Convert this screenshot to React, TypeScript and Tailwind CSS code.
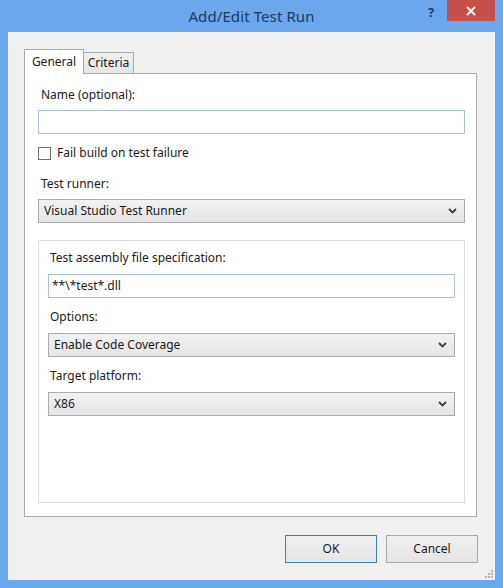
import React from 'react';

const Chevron = () => (
    <svg width="9" height="6" viewBox="0 0 9 6" className="shrink-0">
        <path d="M1 1 L4.5 4.5 L8 1" fill="none" stroke="#404040" strokeWidth="1.8" />
    </svg>
);

const Select = ({ value }: { value: string }) => (
    <div className="h-[24px] flex items-center justify-between pl-[5px] pr-[7px] border border-[#acacac] bg-gradient-to-b from-[#f2f2f2] to-[#e5e5e5] text-[#1a1a1a]">
        <span>{value}</span>
        <Chevron />
    </div>
);

const Label = ({ children, className = '' }: { children: React.ReactNode; className?: string }) => (
    <div className={`h-[16px] leading-[16px] text-[#1a1a1a] ${className}`}>{children}</div>
);

export default function App() {
    return (
        <div className="w-[503px] h-[588px] bg-[#6ba7ec] flex flex-col font-['Noto_Sans',sans-serif] text-[12px] overflow-hidden">
            {/* Title bar */}
            <div className="h-8 shrink-0 relative flex items-center justify-center">
                <span className="text-[15px] text-[#1e3a5c] tracking-[0.1px]">Add/Edit Test Run</span>
                <span className="absolute left-[428px] top-[3px] text-[13px] font-bold text-[#2a3b4f]">?</span>
                <div className="absolute left-[447px] top-0 w-[48px] h-[21px] bg-[#c7504a] flex items-center justify-center">
                    <svg width="10" height="10" viewBox="0 0 10 10">
                        <path d="M1 1 L9 9 M9 1 L1 9" stroke="#fff" strokeWidth="1.8" />
                    </svg>
                </div>
            </div>

            {/* Client area */}
            <div className="mx-2 mb-2 flex-1 bg-[#f0f0f0] flex flex-col pl-4 pr-[18px] pt-[17px] relative">
                {/* Tabs */}
                <div className="flex items-end h-[24px] relative z-10">
                    <div className="w-[60px] h-[25px] -mb-px bg-white border border-b-0 border-[#acacac] flex items-start justify-center pt-[3px] text-[#1a1a1a]">
                        General
                    </div>
                    <div className="w-[50px] h-[21px] bg-gradient-to-b from-[#f0f0f0] to-[#e5e5e5] border border-l-0 border-b-0 border-[#acacac] flex items-center justify-center text-[#1a1a1a]">
                        Criteria
                    </div>
                </div>

                {/* Tab pane */}
                <div className="h-[444px] border border-[#acacac] bg-white pl-[13px] pr-[11px] pt-[13px] flex flex-col">
                    <Label className="pl-[3px]">Name (optional):</Label>
                    <div className="mt-[7px] h-[24px] border border-[#abc1de] bg-white" />

                    <div className="mt-[11px] h-[16px] flex items-center gap-[6px]">
                        <div className="w-[13px] h-[13px] border border-[#707070] bg-white" />
                        <span className="text-[#1a1a1a]">Fail build on test failure</span>
                    </div>

                    <Label className="mt-[15px] pl-[3px]">Test runner:</Label>
                    <div className="mt-[7px]">
                        <Select value="Visual Studio Test Runner" />
                    </div>

                    {/* Group box */}
                    <div className="mt-[17px] flex-1 mb-[13px] border border-[#dcdcdc] px-[9px] pt-[9px] flex flex-col">
                        <Label className="pl-[2px]">Test assembly file specification:</Label>
                        <div className="mt-[8px] h-[24px] border border-[#abc1de] bg-white flex items-center pl-[3px] text-[#1a1a1a]">
                            **\*test*.dll
                        </div>
                        <Label className="mt-[11px] pl-[2px]">Options:</Label>
                        <div className="mt-[8px]">
                            <Select value="Enable Code Coverage" />
                        </div>
                        <Label className="mt-[11px] pl-[2px]">Target platform:</Label>
                        <div className="mt-[8px]">
                            <Select value="X86" />
                        </div>
                    </div>
                </div>

                {/* Buttons */}
                <div className="mt-[18px] flex justify-end gap-[9px] -mr-px">
                    <div className="w-[92px] h-[28px] border border-[#3c7fb1] bg-gradient-to-b from-[#f0f0f0] to-[#e5e5e5] flex items-center justify-center text-[#1a1a1a]">
                        OK
                    </div>
                    <div className="w-[92px] h-[28px] border border-[#acacac] bg-gradient-to-b from-[#f0f0f0] to-[#e5e5e5] flex items-center justify-center text-[#1a1a1a]">
                        Cancel
                    </div>
                </div>

                {/* Resize grip */}
                <svg width="8" height="8" viewBox="0 0 8 8" className="absolute right-[2px] bottom-[2px]">
                    <rect x="6" y="0" width="2" height="2" fill="#b8b8b8" />
                    <rect x="3" y="3" width="2" height="2" fill="#b8b8b8" />
                    <rect x="6" y="3" width="2" height="2" fill="#b8b8b8" />
                    <rect x="0" y="6" width="2" height="2" fill="#b8b8b8" />
                    <rect x="3" y="6" width="2" height="2" fill="#b8b8b8" />
                    <rect x="6" y="6" width="2" height="2" fill="#b8b8b8" />
                </svg>
            </div>
        </div>
    );
}
